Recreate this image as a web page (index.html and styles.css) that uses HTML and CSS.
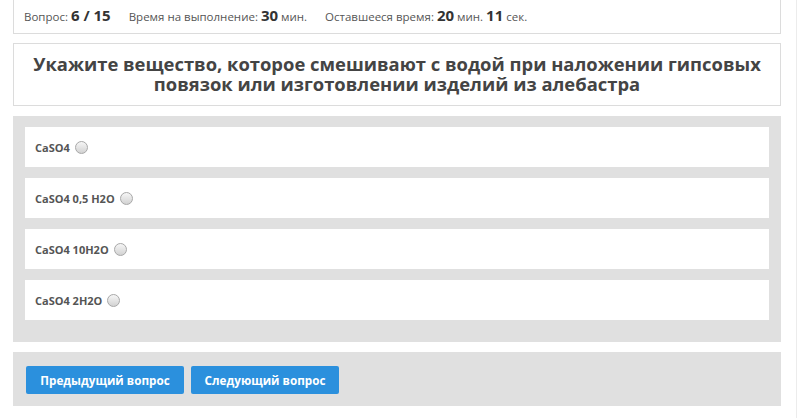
FILE: index.html
```html
<!DOCTYPE html>
<html lang="ru">
<head>
<meta charset="utf-8">
<link rel="stylesheet" href="styles.css">
</head>
<body>
<div class="page">
  <div class="col">
    <div class="info">
      <span class="item">Вопрос: <b>6 / 15</b></span>
      <span class="item">Время на выполнение: <b>30</b> мин.</span>
      <span class="item">Оставшееся время: <b>20</b> мин. <b>11</b> сек.</span>
    </div>
    <div class="question">Укажите вещество, которое смешивают с водой при наложении гипсовых повязок или изготовлении изделий из алебастра</div>
    <div class="answers">
      <label class="answer">CaSO4 <span class="radio"></span></label>
      <label class="answer">CaSO4 0,5 H2O <span class="radio"></span></label>
      <label class="answer">CaSO4 10H2O <span class="radio"></span></label>
      <label class="answer">CaSO4 2H2O <span class="radio"></span></label>
    </div>
    <div class="nav">
      <button class="btn btn-prev">Предыдущий вопрос</button>
      <button class="btn btn-next">Следующий вопрос</button>
    </div>
  </div>
</div>
</body>
</html>
```
FILE: styles.css
```css
html, body {
  margin: 0;
  padding: 0;
  background: #fff;
}
body {
  font-family: "Open Sans", "DejaVu Sans", sans-serif;
  color: #444;
}
.page {
  width: 797px;
  height: 418px;
  border-right: 1px solid #ececec;
  padding-left: 13px;
  box-sizing: border-box;
}
.col {
  width: 768px;
  display: flex;
  flex-direction: column;
}
.info {
  height: 34px;
  box-sizing: border-box;
  border: 1px solid #dcdcdc;
  border-top: none;
  display: flex;
  align-items: center;
  padding: 0 0 4px 10px;
  font-size: 11.5px;
  color: #555;
}
.info .item { margin-right: 18px; }
.info b {
  font-size: 15px;
  color: #333;
  font-weight: 700;
}
.question {
  margin-top: 9px;
  height: 63px;
  box-sizing: border-box;
  border: 1px solid #dcdcdc;
  display: flex;
  align-items: center;
  justify-content: center;
  text-align: center;
  padding: 0 16px 2px;
  font-size: 18.4px;
  font-weight: 700;
  line-height: 20px;
  color: #444;
}
.answers {
  margin-top: 10px;
  background: #e0e0e0;
  padding: 11px 12px 22px;
  display: flex;
  flex-direction: column;
  gap: 11px;
}
.answer {
  height: 40px;
  background: #fff;
  display: flex;
  align-items: center;
  padding-left: 10px;
  font-size: 11px;
  font-weight: 700;
  color: #555;
}
.radio {
  display: inline-block;
  width: 13px;
  height: 13px;
  border-radius: 50%;
  border: 1px solid #a8a8a8;
  background: linear-gradient(#f6f6f6, #d2d2d2);
  margin-left: 5px;
  box-sizing: border-box;
}
.nav {
  margin-top: 10px;
  height: 54px;
  background: #e0e0e0;
  display: flex;
  align-items: center;
  padding-left: 13px;
  gap: 7px;
}
.btn {
  height: 28px;
  border: none;
  border-radius: 2px;
  background: #2b90dd;
  color: #fff;
  font-family: "Open Sans", "DejaVu Sans", sans-serif;
  font-size: 11.7px;
  font-weight: 700;
  padding: 0;
  margin-top: 1px;
}
.btn-prev { width: 158px; }
.btn-next { width: 148px; }
```
